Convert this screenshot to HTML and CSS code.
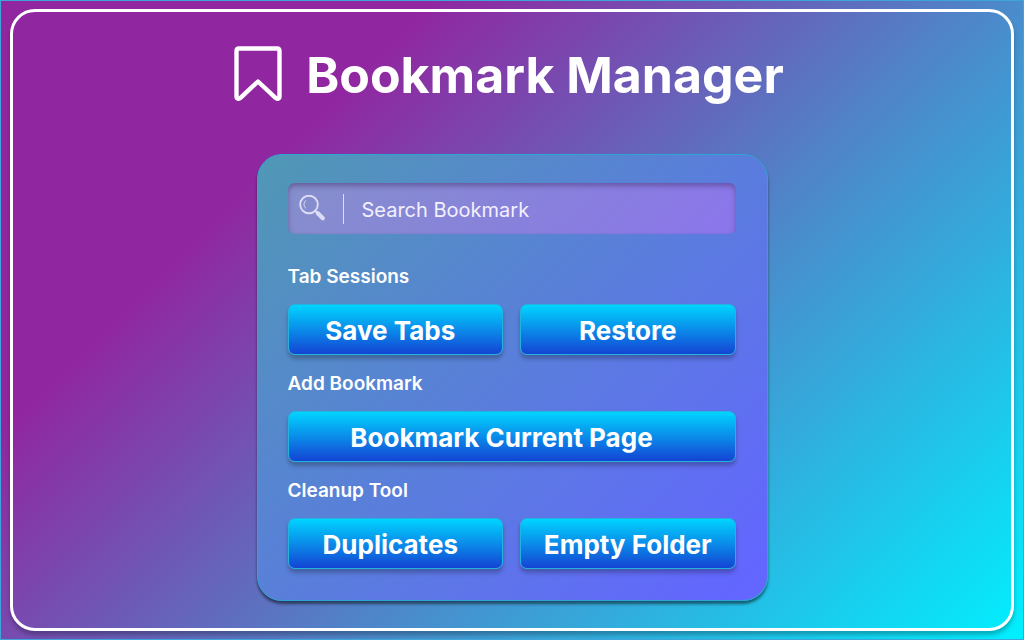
FILE: index.html
```html
<!DOCTYPE html>
<html lang="en">
<head>
<meta charset="utf-8">
<meta name="viewport" content="width=device-width, initial-scale=1">
<title>Bookmark Manager</title>
<link rel="stylesheet" href="styles.css">
</head>
<body>
<div class="frame">
  <header class="header">
    <svg class="logo" viewBox="0 0 48 56" aria-hidden="true"><path d="M5 2.500h38q2.500 0 2.500 2.500v45.500c0 2.200-2.300 3-4 1.300L24 35.500 6.500 51.800c-1.700 1.700-4 .9-4-1.300V5Q2.500 2.500 5 2.500z" fill="none" stroke="#fff" stroke-width="4.400" stroke-linejoin="round"/></svg>
    <h1 class="title">Bookmark Manager</h1>
  </header>
  <main class="card">
    <label class="search">
      <svg class="search-icon" viewBox="0 0 28 28" aria-hidden="true">
        <circle cx="10" cy="9.500" r="8.800" fill="none" stroke="currentColor" stroke-width="1.900"/>
        <path d="M7 5.500c-2.600 1.800-2.600 6 0 7.800" fill="none" stroke="currentColor" stroke-width="1"/>
        <path d="M16 15.500l2.500 2.500" stroke="currentColor" stroke-width="2"/>
        <path d="M18.800 18.300l5 5" stroke="currentColor" stroke-width="4.200" stroke-linecap="round"/>
      </svg>
      <span class="divider"></span>
      <input class="search-input" type="text" placeholder="Search Bookmark" aria-label="Search Bookmark">
    </label>
    <section class="group">
      <h2 class="label">Tab Sessions</h2>
      <div class="row">
        <button class="btn btn-start" type="button">Save Tabs</button>
        <button class="btn" type="button">Restore</button>
      </div>
    </section>
    <section class="group">
      <h2 class="label">Add Bookmark</h2>
      <div class="row row-single">
        <button class="btn btn-wide" type="button">Bookmark Current Page</button>
      </div>
    </section>
    <section class="group">
      <h2 class="label">Cleanup Tool</h2>
      <div class="row">
        <button class="btn btn-start" type="button">Duplicates</button>
        <button class="btn" type="button">Empty Folder</button>
      </div>
    </section>
  </main>
</div>
</body>
</html>
```
FILE: styles.css
```css
* {
  box-sizing: border-box;
}

body {
  margin: 0;
  min-height: 100vh;
  display: flex;
  padding: 8px 9px;
  border: 1px solid #3da5d9;
  background: linear-gradient(135deg, #9127a0 26%, #4b8acb 61%, #00f0ff 100%) border-box;
  color: #fff;
  font-family: Inter, "Liberation Sans", sans-serif;
}

.frame {
  flex: 1;
  display: flex;
  flex-direction: column;
  align-items: center;
  padding: 27px 24px;
  border: 3px solid #fff;
  border-radius: 25px;
  box-shadow: 0 4px 4px rgba(0, 0, 0, 0.25);
}

.header {
  display: flex;
  align-items: center;
  gap: 24px;
  height: 70px;
  margin-bottom: 45px;
  padding-right: 6px;
}

.logo {
  width: 48px;
  height: 56px;
}

.title {
  margin: 0;
  padding-top: 2px;
  font-size: 50px;
  line-height: 70px;
  font-weight: 700;
}

.card {
  width: 100%;
  max-width: 511px;
  padding: 28px 31px 31px 30px;
  border: 1px solid #2da5d4;
  border-radius: 25px;
  background: linear-gradient(135deg, #5098b5, #6366ff 96%);
  box-shadow: 0 3px 3px rgba(0, 0, 0, 0.5);
}

.search {
  display: flex;
  align-items: center;
  height: 51px;
  margin-bottom: 14px;
  padding: 0 11px;
  border-radius: 7px;
  background: linear-gradient(135deg, #858fcb, #8b75eb);
  box-shadow: inset 0 3px 5px rgba(70, 50, 110, 0.5);
}

.search-icon {
  width: 28px;
  height: 28px;
  color: #dcdcf5;
}

.divider {
  width: 1px;
  height: 30px;
  margin: 0 18px 0 16px;
  background: #dcdcf5;
}

.search-input {
  flex: 1;
  min-width: 0;
  padding: 2px 0 0;
  border: 0;
  outline: 0;
  background: none;
  color: #f2f0ff;
  font: 400 20px/30px Inter, "Liberation Sans", sans-serif;
}

.search-input::placeholder {
  color: #f2f0ff;
  opacity: 1;
}

.group {
  padding-top: 17px;
}

.label {
  margin: 0 0 15px;
  font-size: 19px;
  line-height: 24px;
  font-weight: 600;
}

.row {
  display: grid;
  grid-template-columns: 1fr 1fr;
  gap: 17px;
}

.row-single {
  grid-template-columns: 1fr;
}

.btn {
  height: 51px;
  padding: 2px 0 0;
  border: 1px solid #22b4dc;
  border-radius: 7px;
  background: linear-gradient(#00d4ff, #1444d4);
  box-shadow: 0 4px 4px rgba(0, 0, 0, 0.25);
  color: #fff;
  font: 700 26px/32px Inter, "Liberation Sans", sans-serif;
  white-space: nowrap;
  cursor: pointer;
}

.btn-start {
  padding-right: 10px;
}

.btn-wide {
  padding-right: 20px;
}
```
